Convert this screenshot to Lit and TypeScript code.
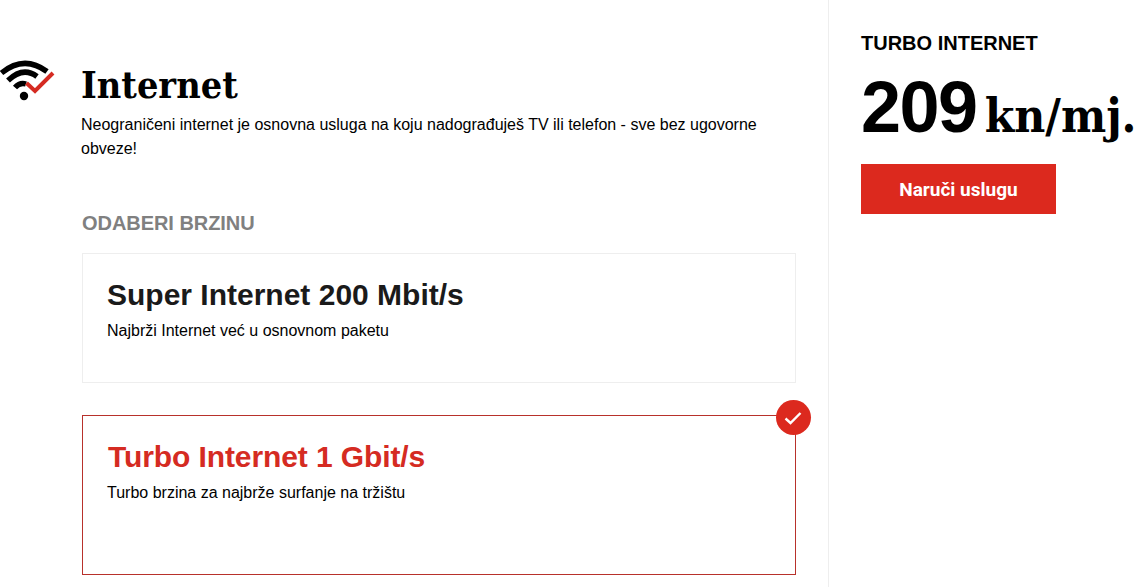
import { LitElement, html, css } from "lit";
import { customElement } from "lit/decorators.js";

@customElement("app-root")
export class AppRoot extends LitElement {
  static styles = css`
    :host { display: block; width: 1142px; height: 587px; overflow: hidden; background: #fff; font-family: "Liberation Sans", Arial, sans-serif; color: #000; }
    .page { display: grid; grid-template-columns: 829px 1fr; height: 587px; }
    .main { border-right: 1px solid #eeeeee; padding: 60px 32px 0 0; }
    .head { display: flex; align-items: flex-start; }
    .icon { width: 81px; flex: none; display: block; }
    .icon svg { display: block; width: 56px; height: 42px; }
    .title { margin: 0; font: 700 37.5px/48px "DejaVu Serif Condensed", "DejaVu Serif", serif; font-stretch: condensed; height: 48px; padding-top: 1px; }
    .lead { margin: 0; font-size: 16px; line-height: 24px; width: 700px; padding-top: 4px; }
    .content { padding-left: 82px; }
    .pick { margin: 50px 0 18px; font-size: 20px; line-height: 24px; font-weight: 700; color: #808080; letter-spacing: -0.05px; }
    .card { position: relative; box-sizing: border-box; border: 1px solid #eeeeee; padding: 24px 24px; height: 130px; }
    .card h3 { margin: 0; font-size: 30px; line-height: 34px; font-weight: 700; color: #1a1a1a; }
    .card p { margin: 9px 0 0; font-size: 16px; line-height: 20px; }
    .card.on { border-color: #b8312b; height: 160px; margin-top: 32px; }
    .card.on h3 { color: #d52b22; padding-left: 1px; letter-spacing: -0.1px; }
    .badge { position: absolute; top: -16px; right: -16px; width: 35px; height: 35px; border-radius: 50%; background: #dc291e; display: flex; align-items: center; justify-content: center; }
    .badge svg { display: block; margin-left: -1px; }
    .side { padding: 31px 0 0 32px; }
    .plan { font-size: 20px; line-height: 24px; font-weight: 700; }
    .price { display: flex; align-items: baseline; white-space: nowrap; margin-top: 14px; height: 76px; }
    .num { font-size: 72px; line-height: 76px; font-weight: 700; letter-spacing: -1.5px; }
    .unit { font: 700 47.5px/48px "DejaVu Serif Condensed", "DejaVu Serif", serif; font-stretch: condensed; margin-left: 8px; }
    .btn { display: flex; align-items: center; justify-content: center; width: 195px; height: 50px; margin-top: 19px; background: #dc291e; color: #fff; font: 700 19px Roboto, "Liberation Sans", sans-serif; border: 0; padding: 0; }
  `;

  render() {
    return html`<div class="page">
      <div class="main">
        <div class="head">
          <div class="icon">
            <svg viewBox="0 0 56 42" fill="none">
              <path d="M1.500 13 Q24 -5.500 47 11.500" stroke="#000" stroke-width="5.500" />
              <path d="M8 20.500 Q23 6 37 16.500" stroke="#000" stroke-width="5.500" />
              <path d="M15 27.500 Q20 22 26 24" stroke="#000" stroke-width="5.500" />
              <circle cx="24" cy="36" r="4.200" fill="#000" />
              <path d="M26.500 23 L35 31 L53 13" stroke="#d52b22" stroke-width="4" />
            </svg>
          </div>
          <div>
            <h1 class="title">Internet</h1>
            <p class="lead">Neograničeni internet je osnovna usluga na koju nadograđuješ TV ili telefon - sve bez ugovorne obveze!</p>
          </div>
        </div>
        <div class="content">
          <div class="pick">ODABERI BRZINU</div>
          <div class="card">
            <h3>Super Internet 200 Mbit/s</h3>
            <p>Najbrži Internet već u osnovnom paketu</p>
          </div>
          <div class="card on">
            <div class="badge">
              <svg width="18" height="14" viewBox="0 0 18 14" fill="none"><path d="M1.500 7.500 L6.500 12 L16.500 2" stroke="#fff" stroke-width="2.400" /></svg>
            </div>
            <h3>Turbo Internet 1 Gbit/s</h3>
            <p>Turbo brzina za najbrže surfanje na tržištu</p>
          </div>
        </div>
      </div>
      <aside class="side">
        <div class="plan">TURBO INTERNET</div>
        <div class="price"><span class="num">209</span><span class="unit">kn/mj.</span></div>
        <button class="btn">Naruči uslugu</button>
      </aside>
    </div>`;
  }
}
